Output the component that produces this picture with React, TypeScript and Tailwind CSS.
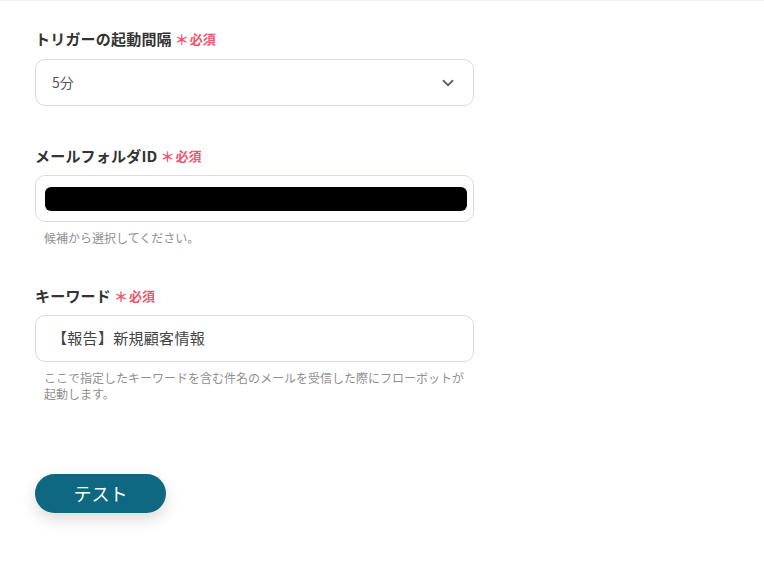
import React from 'react';
import { ChevronDown } from 'lucide-react';

const font = { fontFamily: '"Noto Sans CJK JP", "Noto Sans", sans-serif' };

const FieldLabel = ({ text }: { text: string }) => (
  <div className="flex items-center h-5 leading-5">
    <span className="text-[15px] font-bold text-[#333333] tracking-[0.2px]">{text}</span>
    <span className="ml-[3px] text-[13px] font-bold text-[#f0556e] flex items-center">
      <span className="text-[14px] mr-[1px] leading-none">＊</span>必須
    </span>
  </div>
);

const Help = ({ children }: { children: React.ReactNode }) => (
  <p className="mt-2 pl-[9px] w-[439px] text-[12px] leading-4 text-[#909090]">{children}</p>
);

export default function App() {
  return (
    <div className="w-[764px] h-[561px] bg-white border-t border-[#f0f0f0]" style={font}>
      <div className="pl-[35px] pt-[28px]">
        <FieldLabel text="トリガーの起動間隔" />
        <div className="mt-[10px] w-[439px] h-[47px] rounded-[10px] border border-[#d8dce2] flex items-center justify-between pl-4 pr-4">
          <span className="text-[14px] text-[#555555]">5分</span>
          <ChevronDown size={18} strokeWidth={2.5} className="text-[#666666]" />
        </div>

        <div className="mt-[40px]">
          <FieldLabel text="メールフォルダID" />
        </div>
        <div className="mt-[9px] w-[439px] h-[47px] rounded-[10px] border border-[#d8dce2] flex items-center pl-[9px] pr-[6px]">
          <div className="w-full h-[24px] rounded-[6px] bg-black" />
        </div>
        <Help>候補から選択してください。</Help>

        <div className="mt-[40px]">
          <FieldLabel text="キーワード" />
        </div>
        <div className="mt-[9px] w-[439px] h-[47px] rounded-[10px] border border-[#d8dce2] flex items-center pl-4">
          <span className="text-[15px] text-[#444444] tracking-[0.3px]">【報告】新規顧客情報</span>
        </div>
        <Help>ここで指定したキーワードを含む件名のメールを受信した際にフローボットが起動します。</Help>

        <button className="mt-[72px] w-[131px] h-[39px] rounded-full bg-[#0e6882] text-white text-[18px] shadow-[0_6px_16px_rgba(0,0,0,0.15)]">
          テスト
        </button>
      </div>
    </div>
  );
}
